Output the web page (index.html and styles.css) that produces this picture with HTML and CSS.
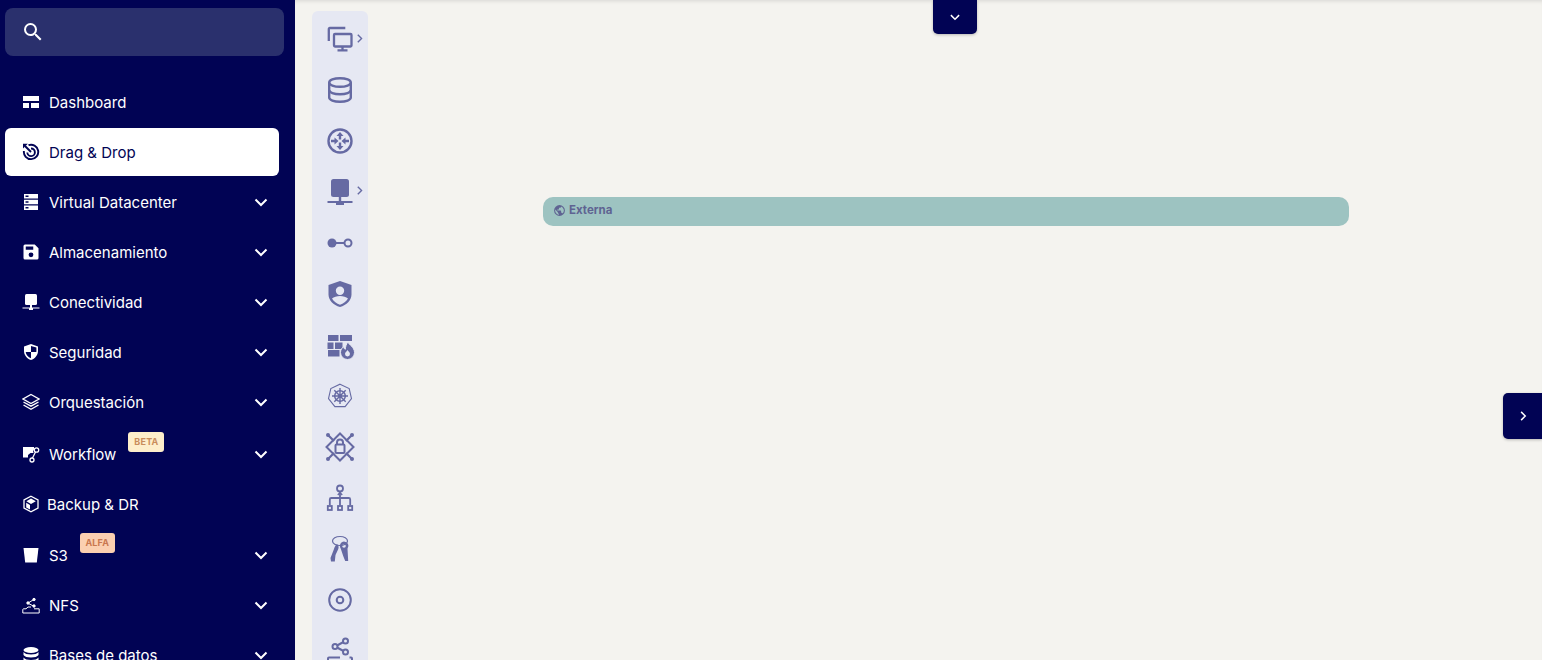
FILE: index.html
```html
<!DOCTYPE html>
<html>
<head>
    <meta charset="UTF-8">
    <title>Drag &amp; Drop</title>
    <link rel="stylesheet" href="styles.css">
</head>
<body>
    <svg class="defs" width="0" height="0">
        <symbol id="chev-down" viewBox="0 0 16 16"><path d="M2.5 5.5 8 11l5.5-5.5" fill="none" stroke="currentColor" stroke-width="2"/></symbol>
        <symbol id="chev-right" viewBox="0 0 16 16"><path d="M5.5 2.5 11 8l-5.5 5.5" fill="none" stroke="currentColor" stroke-width="2"/></symbol>
    </svg>

    <aside class="sidebar">
        <div class="search">
            <svg class="search-icon" viewBox="0 0 24 24" fill="currentColor"><path d="M15.5 14h-.79l-.28-.27A6.47 6.47 0 0 0 16 9.5 6.5 6.5 0 1 0 9.5 16c1.61 0 3.09-.59 4.23-1.57l.27.28v.79l5 4.99L20.49 19l-4.99-5zm-6 0C7.01 14 5 11.99 5 9.5S7.01 5 9.5 5 14 7.01 14 9.5 11.99 14 9.5 14z"/></svg>
        </div>
        <nav class="menu">
            <a class="item">
                <svg class="icon" viewBox="0 0 18 18" fill="currentColor"><path d="M1 3h16v5H1zM1 10h6v5H1zM9 10h8v5H9z"/></svg>
                <span>Dashboard</span>
            </a>
            <a class="item active">
                <svg class="icon" viewBox="0 0 18 18" fill="none" stroke="currentColor" stroke-width="1.900"><path d="M6.500 2.200A7.200 7.200 0 1 1 1.900 8"/><path d="M9 5.500A3.800 3.800 0 1 1 5.300 9.500"/><path d="M3 3 9 9"/><path d="M1 .8h4.800L1 5.600z" fill="currentColor" stroke="none"/></svg>
                <span>Drag &amp; Drop</span>
            </a>
            <a class="item">
                <svg class="icon" viewBox="0 0 18 18" fill="currentColor"><path fill-rule="evenodd" d="M2 1h14v4.600H2zM2 6.700h14v4.600H2zM2 12.400h14V17H2zM3.500 2.600v1.400h3V2.600zM3.500 8.300v1.400h3V8.300zM3.500 14v1.400h3V14z"/></svg>
                <span>Virtual Datacenter</span>
                <svg class="chev"><use href="#chev-down"/></svg>
            </a>
            <a class="item">
                <svg class="icon" viewBox="0 0 24 24" fill="currentColor"><path d="M17 2H4a2 2 0 0 0-2 2v16a2 2 0 0 0 2 2h16a2 2 0 0 0 2-2V7l-5-5zm-5 17a3.200 3.200 0 1 1 0-6.400 3.200 3.200 0 0 1 0 6.400zm3-10H5V4.500h10V9z"/></svg>
                <span>Almacenamiento</span>
                <svg class="chev"><use href="#chev-down"/></svg>
            </a>
            <a class="item">
                <svg class="icon" viewBox="0 0 18 18" fill="currentColor"><rect x="3" y="1" width="12" height="11" rx="1.500"/><path d="M8 12h2v2.500h7.500v1H11V17H7v-1.500H.5v-1H8z"/></svg>
                <span>Conectividad</span>
                <svg class="chev"><use href="#chev-down"/></svg>
            </a>
            <a class="item">
                <svg class="icon" viewBox="0 0 18 18" fill="currentColor"><path fill-rule="evenodd" d="M9 1l7 2.500V8c0 4.200-3 7.700-7 9-4-1.300-7-4.800-7-9V3.500zM9 3v6H3.700c.3 2.900 2.400 5.200 5.300 6.200V9h5.300c.1-.4.100-.7.100-1V4.600z"/></svg>
                <span>Seguridad</span>
                <svg class="chev"><use href="#chev-down"/></svg>
            </a>
            <a class="item">
                <svg class="icon" viewBox="0 0 18 18" fill="none" stroke="currentColor" stroke-width="1.400"><path d="M9 1.500 17 6l-8 4.500L1 6z"/><path d="M1.500 9 9 13.200 16.500 9"/><path d="M1.500 12 9 16.300 16.500 12"/></svg>
                <span>Orquestación</span>
                <svg class="chev"><use href="#chev-down"/></svg>
            </a>
            <a class="item workflow">
                <svg class="icon" viewBox="0 0 18 18" fill="currentColor"><path d="M1 2h11v2.500a2.800 2.800 0 0 0-.5 3.500H8.500L6 10v2.500H1z"/><circle cx="14.500" cy="5" r="2.200" fill="none" stroke="currentColor" stroke-width="1.300"/><circle cx="10" cy="15" r="2" fill="none" stroke="currentColor" stroke-width="1.300"/><path d="M13.500 7 10.500 13" stroke="currentColor" stroke-width="1.200"/></svg>
                <span>Workflow</span>
                <b class="badge beta">BETA</b>
                <svg class="chev"><use href="#chev-down"/></svg>
            </a>
            <a class="item backup">
                <svg class="icon" viewBox="0 0 18 18" fill="none" stroke="currentColor"><path d="M9 1.200 16 5v8l-7 3.800L2 13V5z" stroke-width="1.300"/><path d="M9 3.600 13.800 6.200 9 9 4.400 6.200zM4.200 7.800 8 10v4.600l-3.800-2.200z" fill="currentColor" stroke="none"/></svg>
                <span>Backup &amp; DR</span>
            </a>
            <a class="item bucket">
                <svg class="icon" viewBox="0 0 18 18" fill="currentColor"><path d="M1.500 2h15l-1.700 14.500H3.200z"/></svg>
                <span>S3</span>
                <b class="badge alfa">ALFA</b>
                <svg class="chev"><use href="#chev-down"/></svg>
            </a>
            <a class="item">
                <svg class="icon" viewBox="0 0 18 18" fill="none" stroke="currentColor" stroke-width="1"><path d="M.8 17v-3.500c0-.4.300-.7.700-.7h2.500l2-1.800h3M12 12.800h5.200V17H.8"/><path d="M6.500 6.800 11 4M6.500 7.500l4.500 2.300"/><circle cx="12" cy="3.500" r="1.200" fill="currentColor"/><circle cx="6" cy="7" r="1.200" fill="currentColor"/><circle cx="12" cy="10" r="1.200" fill="currentColor"/></svg>
                <span>NFS</span>
                <svg class="chev"><use href="#chev-down"/></svg>
            </a>
            <a class="item">
                <svg class="icon" viewBox="0 0 18 18" fill="currentColor"><ellipse cx="9" cy="4" rx="7.500" ry="3"/><path d="M1.500 6c1 1.700 4 2.500 7.500 2.500S15.500 7.700 16.500 6v3c-1 1.700-4 2.500-7.500 2.500S2.500 10.700 1.500 9zM1.500 11.500c1 1.700 4 2.500 7.500 2.500s6.500-.8 7.500-2.500V14c0 1.700-3.400 3-7.500 3s-7.500-1.300-7.500-3z"/></svg>
                <span>Bases de datos</span>
                <svg class="chev"><use href="#chev-down"/></svg>
            </a>
        </nav>
    </aside>

    <main class="board">
        <div class="palette">
            <div class="tool">
                <svg viewBox="0 0 26 26" fill="none" stroke="currentColor" stroke-width="2.300"><path d="M1.800 15V3c0-.6.400-1 1-1h15.500"/><rect x="7" y="8" width="17.500" height="12.500" rx="1"/><path d="M15.500 20.500v3.500M10.500 24.300h10"/></svg>
                <svg class="more"><use href="#chev-right"/></svg>
            </div>
            <div class="tool">
                <svg viewBox="0 0 26 26" fill="none" stroke="currentColor" stroke-width="2.400"><ellipse cx="13" cy="5.500" rx="10.800" ry="4.300"/><path d="M2.200 5.500v15c0 2.400 4.800 4.300 10.800 4.300s10.800-1.900 10.800-4.300v-15"/><path d="M2.200 13c0 2.400 4.800 4.300 10.800 4.300s10.800-1.900 10.800-4.300"/></svg>
            </div>
            <div class="tool">
                <svg viewBox="0 0 26 26" fill="currentColor"><circle cx="13" cy="13" r="11.500" fill="none" stroke="currentColor" stroke-width="2.400"/><path d="M13 4l3.500 4H14.200v3.500h-2.400V8H9.500zM13 22l3.500-4H14.200v-3.500h-2.400V18H9.500zM11.500 13 7.500 9.500v2.300H4v2.400h3.500v2.300zM14.500 13l4-3.500v2.300H22v2.400h-3.500v2.300z"/></svg>
            </div>
            <div class="tool">
                <svg viewBox="0 0 26 26" fill="currentColor"><rect x="4" y="0" width="18" height="18" rx="2.500"/><path d="M11.800 18h2.400v4h11.300v2H17v2H9v-2H.5v-2h11.300z"/></svg>
                <svg class="more host"><use href="#chev-right"/></svg>
            </div>
            <div class="tool">
                <svg viewBox="0 0 26 26" fill="none" stroke="currentColor" stroke-width="2"><circle cx="5" cy="13" r="4.500" fill="currentColor" stroke="none"/><path d="M8 13h9"/><circle cx="21" cy="13" r="3.500"/></svg>
            </div>
            <div class="tool">
                <svg viewBox="0 0 26 26" fill="currentColor"><path fill-rule="evenodd" d="M13 0l11.500 4v9.500c0 5.700-4.800 10.700-11.500 12.500C6.300 24.200 1.500 19.200 1.500 13.500V4zM13 5.500a4.200 4.200 0 1 0 0 8.400 4.200 4.200 0 0 0 0-8.400zM5 17.500c1.500 2.700 4.800 5.200 8 6.300 3.200-1.100 6.500-3.600 8-6.300-1.800-1.700-4.800-2.600-8-2.600s-6.200.9-8 2.600z"/></svg>
            </div>
            <div class="tool">
                <svg viewBox="0 0 26 26" fill="currentColor"><path d="M1 3h10.500v6H1zM13 3h12v6H13zM.5 10.500h6V17h-6zM8 10.500h7.500V17H8zM1 18h11.500v6.500H1z"/><path d="M21 10c1 3 6.500 5 6.500 10.500a7 7 0 0 1-14 0c0-2.700 1.500-4.500 3-6 .2 1.500.8 2.300 1.800 2.800.2-2.500.9-5.300 2.700-7.300z" stroke="#e6e8f3" stroke-width="1"/><path d="M20.500 18c.6 1.400 2.500 2.200 2.500 4a2.500 2.500 0 0 1-5 0c0-1.700 1.800-2.600 2.500-4z" fill="#e6e8f3"/></svg>
            </div>
            <div class="tool">
                <svg viewBox="0 0 26 26" fill="none" stroke="currentColor"><path d="M13 1.200 22.200 5.600l2.300 10-6.400 8H7.900l-6.400-8 2.300-10z" stroke-width="1.100"/><circle cx="13" cy="13" r="5.300" stroke-width="1.500"/><circle cx="13" cy="13" r="1.600" fill="currentColor" stroke="none"/><path d="M13 5v16M5 13h16M7.300 7.300l11.400 11.400M18.700 7.300 7.300 18.700" stroke-width="1.400"/></svg>
            </div>
            <div class="tool tool-wide">
                <svg viewBox="0 0 30 30" fill="none" stroke="currentColor" stroke-width="2"><path d="M15 1.500 28.500 15 15 28.500 1.500 15z"/><path d="M3 3l6 6M27 3l-6 6M3 27l6-6M27 27l-6-6" stroke-width="2.200"/><circle cx="3" cy="3" r="2" fill="currentColor" stroke="none"/><circle cx="27" cy="3" r="2" fill="currentColor" stroke="none"/><circle cx="3" cy="27" r="2" fill="currentColor" stroke="none"/><circle cx="27" cy="27" r="2" fill="currentColor" stroke="none"/><rect x="10.500" y="12.500" width="9" height="8.500" rx="1"/><path d="M12 12.500v-2a3 3 0 0 1 6 0v2"/></svg>
            </div>
            <div class="tool">
                <svg viewBox="0 0 26 26" fill="none" stroke="currentColor" stroke-width="1.800"><circle cx="13" cy="3.500" r="3"/><path d="M13 7.500v13M2.800 20v-5.500c0-.8.700-1.500 1.500-1.500h17.400c.8 0 1.500.7 1.500 1.500V20"/><path d="M10.800 10 13 7.500l2.200 2.500" stroke-width="1.400"/><rect x=".8" y="21" width="4" height="4"/><rect x="11" y="21" width="4" height="4"/><rect x="21.200" y="21" width="4" height="4"/></svg>
            </div>
            <div class="tool">
                <svg viewBox="0 0 26 26" fill="currentColor"><ellipse cx="13" cy="5" rx="7.500" ry="4.500" fill="none" stroke="currentColor" stroke-width="1.200"/><path d="M10 8c1.500 1 2 3 1.300 5L8.500 19l-.7 6.500H4L3.500 22l3.500-9c.5-2 1.500-4 3-5z"/><path fill-rule="evenodd" d="M17 5.500a4.500 4.500 0 0 1 3.500 7.300l.7 12.200h-3l-2-5-2.500-7.500A4.500 4.500 0 0 1 17 5.500zm0 2.700a1.800 1.800 0 1 0 0 3.600 1.800 1.800 0 0 0 0-3.600z"/></svg>
            </div>
            <div class="tool">
                <svg viewBox="0 0 26 26" fill="none" stroke="currentColor" stroke-width="2"><circle cx="13" cy="13" r="10.800"/><circle cx="13" cy="13" r="3.300"/></svg>
            </div>
            <div class="tool">
                <svg viewBox="0 0 26 26" fill="none" stroke="currentColor" stroke-width="2"><circle cx="18.500" cy="3" r="2.500"/><circle cx="8" cy="8.500" r="2.500"/><circle cx="18.500" cy="14" r="2.500"/><path d="M10 7.500 16.500 4M10 9.500l6.500 3.500"/><path d="M1 25v-4.500c0-.6.400-1 1-1h11M22.500 19.500h1.500c.6 0 1 .4 1 1V25"/></svg>
            </div>
        </div>

        <div class="zone">
            <svg class="zone-icon" viewBox="0 0 24 24" fill="currentColor"><path d="M12 2a10 10 0 1 0 0 20 10 10 0 0 0 0-20zm-1 17.900A8 8 0 0 1 4.200 10.200L9 15v1a2 2 0 0 0 2 2zm6.900-2.500A2 2 0 0 0 16 16h-1v-3a1 1 0 0 0-1-1H8v-2h2a1 1 0 0 0 1-1V7h2a2 2 0 0 0 2-2v-.4a8 8 0 0 1 2.900 12.800z"/></svg>
            <span>Externa</span>
        </div>

        <button class="tab tab-top"><svg><use href="#chev-down"/></svg></button>
        <button class="tab tab-right"><svg><use href="#chev-right"/></svg></button>
    </main>
</body>
</html>
```

FILE: styles.css
```css
html, body {
    height: 100%;
}
body {
    margin: 0;
    display: flex;
    overflow: hidden;
    background-color: #f4f3ef;
    font-family: Inter, "Noto Sans", sans-serif;
}
.defs {
    position: absolute;
}

/* sidebar */
.sidebar {
    flex: 0 0 295px;
    padding: 8px 0 0 5px;
    box-sizing: border-box;
    background-color: #010354;
    color: #fff;
}
.search {
    width: 279px;
    height: 48px;
    display: flex;
    align-items: center;
    padding-left: 16px;
    box-sizing: border-box;
    border-radius: 8px;
    background-color: #2a306d;
}
.search-icon {
    width: 24px;
    height: 24px;
}
.menu {
    display: flex;
    flex-direction: column;
    gap: 2px;
    width: 274px;
    margin-top: 22px;
}
.item {
    flex: 0 0 48px;
    display: flex;
    align-items: center;
    gap: 9px;
    padding: 0 10px 0 17px;
    border-radius: 6px;
    font-size: 15px;
}
.item.active {
    background-color: #fff;
    color: #010354;
}
.item.workflow {
    margin-top: 2px;
}
.item.bucket {
    margin-top: 1px;
}
.item.backup {
    gap: 7px;
}
.icon {
    flex: 0 0 18px;
    width: 18px;
    height: 18px;
}
.chev {
    width: 16px;
    height: 16px;
    margin-left: auto;
}
.badge {
    align-self: flex-start;
    margin: 2px 0 0 3px;
    padding: 0 6px;
    height: 20px;
    line-height: 20px;
    border-radius: 3px;
    font-size: 9px;
    font-weight: 700;
    letter-spacing: 0.2px;
}
.beta {
    background-color: #fdeecb;
    color: #c98d5c;
}
.alfa {
    padding: 0 5.500px;
    background-color: #fbcfb0;
    color: #c9774e;
}

/* canvas */
.board {
    flex: 1;
    position: relative;
    overflow: hidden;
    box-shadow: inset 0 4px 4px -3px rgba(0, 0, 0, 0.12);
}
.palette {
    width: 56px;
    height: 700px;
    margin: 11px 0 0 17px;
    padding-top: 2px;
    box-sizing: border-box;
    border-radius: 6px 6px 0 0;
    background-color: #e6e8f3;
    color: #666aa3;
}
.tool {
    position: relative;
    height: 51px;
    display: flex;
    align-items: center;
    justify-content: center;
}
.tool svg {
    width: 26px;
    height: 26px;
    overflow: visible;
}
.tool.tool-wide svg {
    width: 30px;
    height: 30px;
}
.tool .more {
    position: absolute;
    right: 3.500px;
    top: 19.500px;
    width: 11px;
    height: 11px;
}
.tool .more.host {
    top: 19px;
}
.zone {
    position: absolute;
    left: 248px;
    top: 197px;
    width: 806px;
    height: 29px;
    display: flex;
    align-items: center;
    gap: 3px;
    padding: 0 0 3px 10px;
    box-sizing: border-box;
    border-radius: 10px;
    background-color: #9dc3c1;
    color: #5f6392;
    font-size: 11.500px;
    font-weight: 700;
}
.zone-icon {
    width: 13px;
    height: 13px;
}
.tab {
    position: absolute;
    display: flex;
    align-items: center;
    justify-content: center;
    padding: 0;
    border: 0;
    background-color: #010354;
    color: #fff;
    box-shadow: 0 1px 3px rgba(0, 0, 0, 0.25);
}
.tab svg {
    width: 12px;
    height: 12px;
}
.tab-top {
    left: 638px;
    top: 0;
    width: 44px;
    height: 34px;
    border-radius: 0 0 5px 5px;
}
.tab-right {
    right: 0;
    top: 393px;
    width: 39px;
    height: 46px;
    border-radius: 5px 0 0 5px;
}
```
